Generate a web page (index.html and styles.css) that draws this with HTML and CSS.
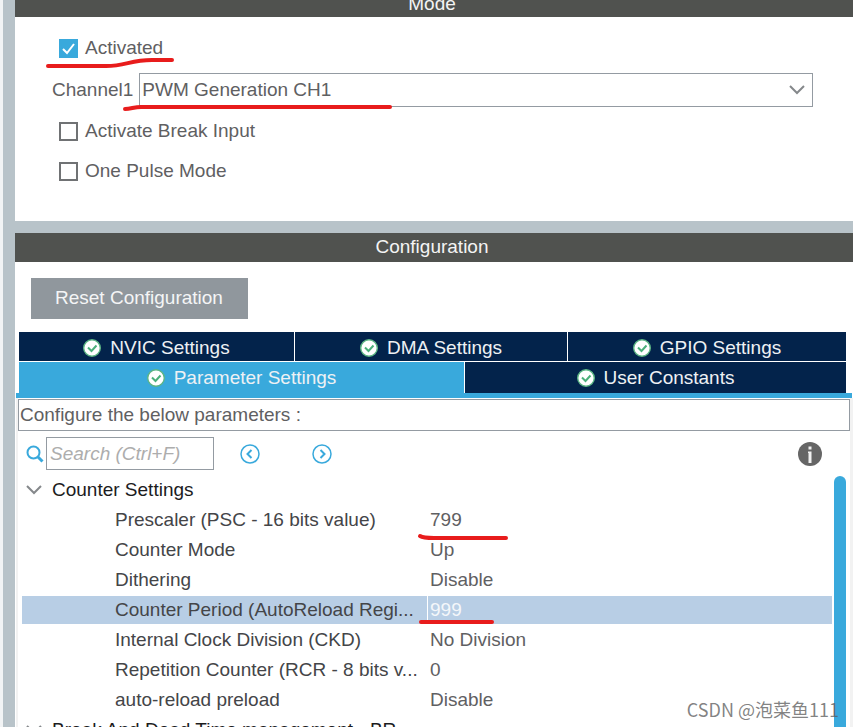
FILE: index.html
```
<!DOCTYPE html>
<html lang="en">
<head>
  <meta charset="UTF-8">
  <title>Mode and Configuration</title>
  <link rel="stylesheet" href="styles.css">
</head>
<body>

  <!-- Shared icons -->
  <svg class="sprite" aria-hidden="true">
    <symbol id="ok" viewBox="0 0 18 18">
      <circle cx="9" cy="9" r="8.300" fill="#fff" stroke="#5cb584" stroke-width="1.400"/>
      <path d="M5 8.500l3.500 3.500 5-5.500" fill="none" stroke="#4bb07a" stroke-width="2"/>
    </symbol>
    <symbol id="chevron" viewBox="0 0 16 10">
      <path d="M1 1l7 7 7-7" fill="none" stroke="#85888b" stroke-width="2"/>
    </symbol>
  </svg>

  <div class="side"></div>

  <main class="panels">

    <!-- Mode -->
    <section class="panel">
      <h2 class="panel-title mode-title">Mode</h2>
      <div class="mode-body">
        <label class="check"><input type="checkbox" checked> Activated</label>
        <div class="channel">
          <label for="channel1">Channel1</label>
          <div class="select-box">
            <select id="channel1">
              <option>PWM Generation CH1</option>
            </select>
            <svg class="select-arrow" width="16" height="10"><use href="#chevron"/></svg>
          </div>
        </div>
        <label class="check"><input type="checkbox"> Activate Break Input</label>
        <label class="check last"><input type="checkbox"> One Pulse Mode</label>
      </div>
    </section>

    <!-- Configuration -->
    <section class="panel config">
      <h2 class="panel-title">Configuration</h2>
      <button class="reset" type="button">Reset Configuration</button>

      <div class="tabs">
        <div class="tab-row">
          <button class="tab nvic" type="button"><svg width="18" height="18"><use href="#ok"/></svg>NVIC Settings</button>
          <button class="tab dma" type="button"><svg width="18" height="18"><use href="#ok"/></svg>DMA Settings</button>
          <button class="tab gpio" type="button"><svg width="18" height="18"><use href="#ok"/></svg>GPIO Settings</button>
        </div>
        <div class="tab-row second">
          <button class="tab params active" type="button"><svg width="18" height="18"><use href="#ok"/></svg>Parameter Settings</button>
          <button class="tab constants" type="button"><svg width="18" height="18"><use href="#ok"/></svg>User Constants</button>
        </div>
      </div>
      <div class="tab-line"></div>

      <div class="tab-content">
        <p class="hint">Configure the below parameters :</p>

        <div class="toolbar">
          <svg width="18" height="18" viewBox="0 0 18 18" fill="none" stroke="#39a9dc" stroke-width="2">
            <circle cx="7.500" cy="7.500" r="6"/>
            <path d="M12 12l4.500 4.500" stroke-width="3"/>
          </svg>
          <input class="search" type="text" placeholder="Search (Ctrl+F)" aria-label="Search">
          <button class="nav" type="button" aria-label="Previous">
            <svg width="20" height="20" viewBox="0 0 20 20" fill="none" stroke="#39a9dc">
              <circle cx="10" cy="10" r="9" stroke-width="1.500"/>
              <path d="M11.500 6l-4 4 4 4" stroke-width="2"/>
            </svg>
          </button>
          <button class="nav next" type="button" aria-label="Next">
            <svg width="20" height="20" viewBox="0 0 20 20" fill="none" stroke="#39a9dc">
              <circle cx="10" cy="10" r="9" stroke-width="1.500"/>
              <path d="M8.500 6l4 4-4 4" stroke-width="2"/>
            </svg>
          </button>
          <button class="nav info" type="button" aria-label="Information">
            <svg width="24" height="24" viewBox="0 0 24 24">
              <circle cx="12" cy="12" r="12" fill="#666"/>
              <path d="M10.500 4.500h3v3h-3zM10 9.500h3.500V21h-3V11H10z" fill="#f2f2f2"/>
            </svg>
          </button>
        </div>

        <div class="tree">
          <table class="params-table">
            <tr class="group">
              <th colspan="2"><svg width="16" height="10"><use href="#chevron"/></svg>Counter Settings</th>
            </tr>
            <tr><td>Prescaler (PSC - 16 bits value)</td><td>799</td></tr>
            <tr><td>Counter Mode</td><td>Up</td></tr>
            <tr><td>Dithering</td><td>Disable</td></tr>
            <tr class="selected"><td>Counter Period (AutoReload Regi...</td><td>999</td></tr>
            <tr><td>Internal Clock Division (CKD)</td><td>No Division</td></tr>
            <tr><td>Repetition Counter (RCR - 8 bits v...</td><td>0</td></tr>
            <tr><td>auto-reload preload</td><td>Disable</td></tr>
            <tr class="group">
              <th colspan="2"><svg width="16" height="10"><use href="#chevron"/></svg>Break And Dead Time management - BR...</th>
            </tr>
          </table>
          <div class="scrollbar"></div>
        </div>
      </div>
    </section>

  </main>

  <!-- Red pen marks -->
  <svg class="marks" width="853" height="727" viewBox="0 0 853 727" aria-hidden="true">
    <path d="M48 66h58c20 0 24-6 46-6h20"/>
    <path d="M125 109c6 0 9-2 16-2h249"/>
    <path d="M420 536c3 2 8 2 14 2h72"/>
    <path d="M421 622h71"/>
  </svg>
  <div class="watermark">CSDN @泡菜鱼111</div>

</body>
</html>
```
FILE: styles.css
```
* {
  box-sizing: border-box;
}

body {
  display: flex;
  height: 100vh;
  margin: 0;
  overflow: hidden;
  position: relative;
  background-color: #b8c3c9;
  color: #5f6062;
  font-family: "Liberation Sans", Arial, sans-serif;
  font-size: 19px;
  line-height: 24px;
}

button, input, select {
  font: inherit;
  color: inherit;
  margin: 0;
}

button {
  border: none;
  padding: 0;
}

.sprite {
  position: absolute;
  width: 0;
  height: 0;
}

/* Edge of the neighbouring pane */
.side {
  width: 3px;
  margin-right: 12px;
  background-color: #f2f4f5;
}

.panels {
  flex: 1;
  min-width: 0;
  display: flex;
  flex-direction: column;
  gap: 12px;
}

.panel {
  background-color: #fff;
}

.panel-title {
  margin: 0;
  padding: 2px 4px 3px 0;
  background-color: #50524f;
  color: #f4f4f4;
  font-size: 19px;
  font-weight: normal;
  text-align: center;
}

/* The top of the first title is scrolled out of view */
.mode-title {
  margin-top: -12px;
  padding-top: 4px;
  padding-bottom: 1px;
}

/* Mode */
.mode-body {
  display: flex;
  flex-direction: column;
  align-items: flex-start;
  padding: 19px 40px 38px 37px;
}

.check {
  display: flex;
  align-items: center;
  gap: 7px;
  padding-left: 7px;
}

.check.last {
  margin-top: 16px;
}

.check input {
  appearance: none;
  width: 19px;
  height: 19px;
  border: 2px solid #707274;
  background-color: #fff;
}

.check input:checked {
  border: none;
  background: #39a9dc url("data:image/svg+xml,%3Csvg xmlns='http://www.w3.org/2000/svg' viewBox='0 0 19 19'%3E%3Cpath d='M4 10l4 4 7-9' fill='none' stroke='white' stroke-width='2'/%3E%3C/svg%3E");
}

.channel {
  display: flex;
  align-items: center;
  gap: 6px;
  align-self: stretch;
  margin: 13px 0 12px;
}

.select-box {
  flex: 1;
  display: flex;
  position: relative;
}

.select-box select {
  appearance: none;
  width: 100%;
  height: 34px;
  padding: 0 30px 0 2px;
  border: 1px solid #949ba2;
  border-radius: 0;
  background-color: #fff;
}

.select-arrow {
  position: absolute;
  right: 8px;
  top: 12px;
  pointer-events: none;
}

/* Configuration */
.config {
  flex: 1;
  display: flex;
  flex-direction: column;
  min-height: 0;
}

.reset {
  align-self: flex-start;
  margin: 16px 16px 13px;
  padding: 8px 25px 9px 24px;
  background-color: #90979d;
  color: #f4f5f6;
}

.tabs {
  padding: 0 7px 0 4px;
}

.tab-row {
  display: flex;
  gap: 1px;
  margin-bottom: 1px;
}

.tab-row.second {
  margin-bottom: 0;
}

.tab {
  display: flex;
  align-items: center;
  justify-content: center;
  gap: 9px;
  height: 29px;
  padding-top: 2px;
  background-color: #03234b;
  color: #eef1f4;
}

.second .tab {
  height: 31px;
  padding-top: 0;
}

.nvic { flex: 275; }
.dma { flex: 272; }
.gpio { flex: 278; }
.params { flex: 445; }
.constants { flex: 381; }

.second .active {
  background-color: #39a9dc;
}

.tab-line {
  height: 5px;
  margin: 0 1px;
  background-color: #39a9dc;
}

.tab-content {
  flex: 1;
  display: flex;
  flex-direction: column;
  min-height: 0;
  margin-left: 1px;
  border-left: 2px solid #f2f2f2;
  border-right: 3px solid #f2f2f2;
}

.hint {
  margin: 1px 0 6px;
  padding: 3px 1px;
  border: 1px solid #949ba2;
}

.toolbar {
  display: flex;
  align-items: center;
  padding: 0 28px 0 8px;
}

.search {
  width: 168px;
  height: 33px;
  margin: 0 26px 0 2px;
  padding: 0 3px;
  border: 1px solid #949ba2;
  border-radius: 0;
}

.search::placeholder {
  color: #adadad;
  font-style: italic;
}

.nav {
  display: flex;
  background: none;
}

.nav.next {
  margin-left: 52px;
}

.nav.info {
  margin-left: auto;
}

/* Parameter tree */
.tree {
  flex: 1;
  display: flex;
  align-items: flex-start;
  gap: 2px;
  min-height: 0;
  margin-top: 5px;
  padding: 0 4px;
  overflow: hidden;
}

.params-table {
  flex: 1;
  border-collapse: separate;
  border-spacing: 0;
  table-layout: fixed;
}

.params-table td,
.params-table th {
  height: 30px;
  padding: 2px 0;
  white-space: nowrap;
  font-weight: normal;
  text-align: left;
  border-top: 1px solid #fff;
  border-bottom: 1px solid #fff;
}

.params-table th {
  color: #1c1c1e;
}

.params-table th svg {
  margin: 0 10px 1px 4px;
}

.params-table td:first-child {
  width: 405px;
  padding-left: 93px;
  color: #444548;
}

.params-table td:last-child {
  padding-left: 3px;
}

.selected td {
  background-color: #b8cee5;
}

.params-table .selected td:last-child {
  border-left: 1px solid #fff;
  padding-left: 2px;
  color: #f4f7fa;
}

.scrollbar {
  align-self: stretch;
  width: 12px;
  margin-top: 1px;
  border-radius: 6px 6px 0 0;
  background-color: #39a9dc;
}

/* Drawn over the panels */
.marks {
  position: absolute;
  left: 0;
  top: 0;
  fill: none;
  stroke: #e81c1c;
  stroke-width: 4;
  stroke-linecap: round;
  pointer-events: none;
}

.watermark {
  position: absolute;
  right: 14px;
  bottom: 6px;
  color: rgba(90, 90, 90, 0.75);
  font-family: "Noto Sans CJK SC", sans-serif;
  font-size: 18px;
}
```
